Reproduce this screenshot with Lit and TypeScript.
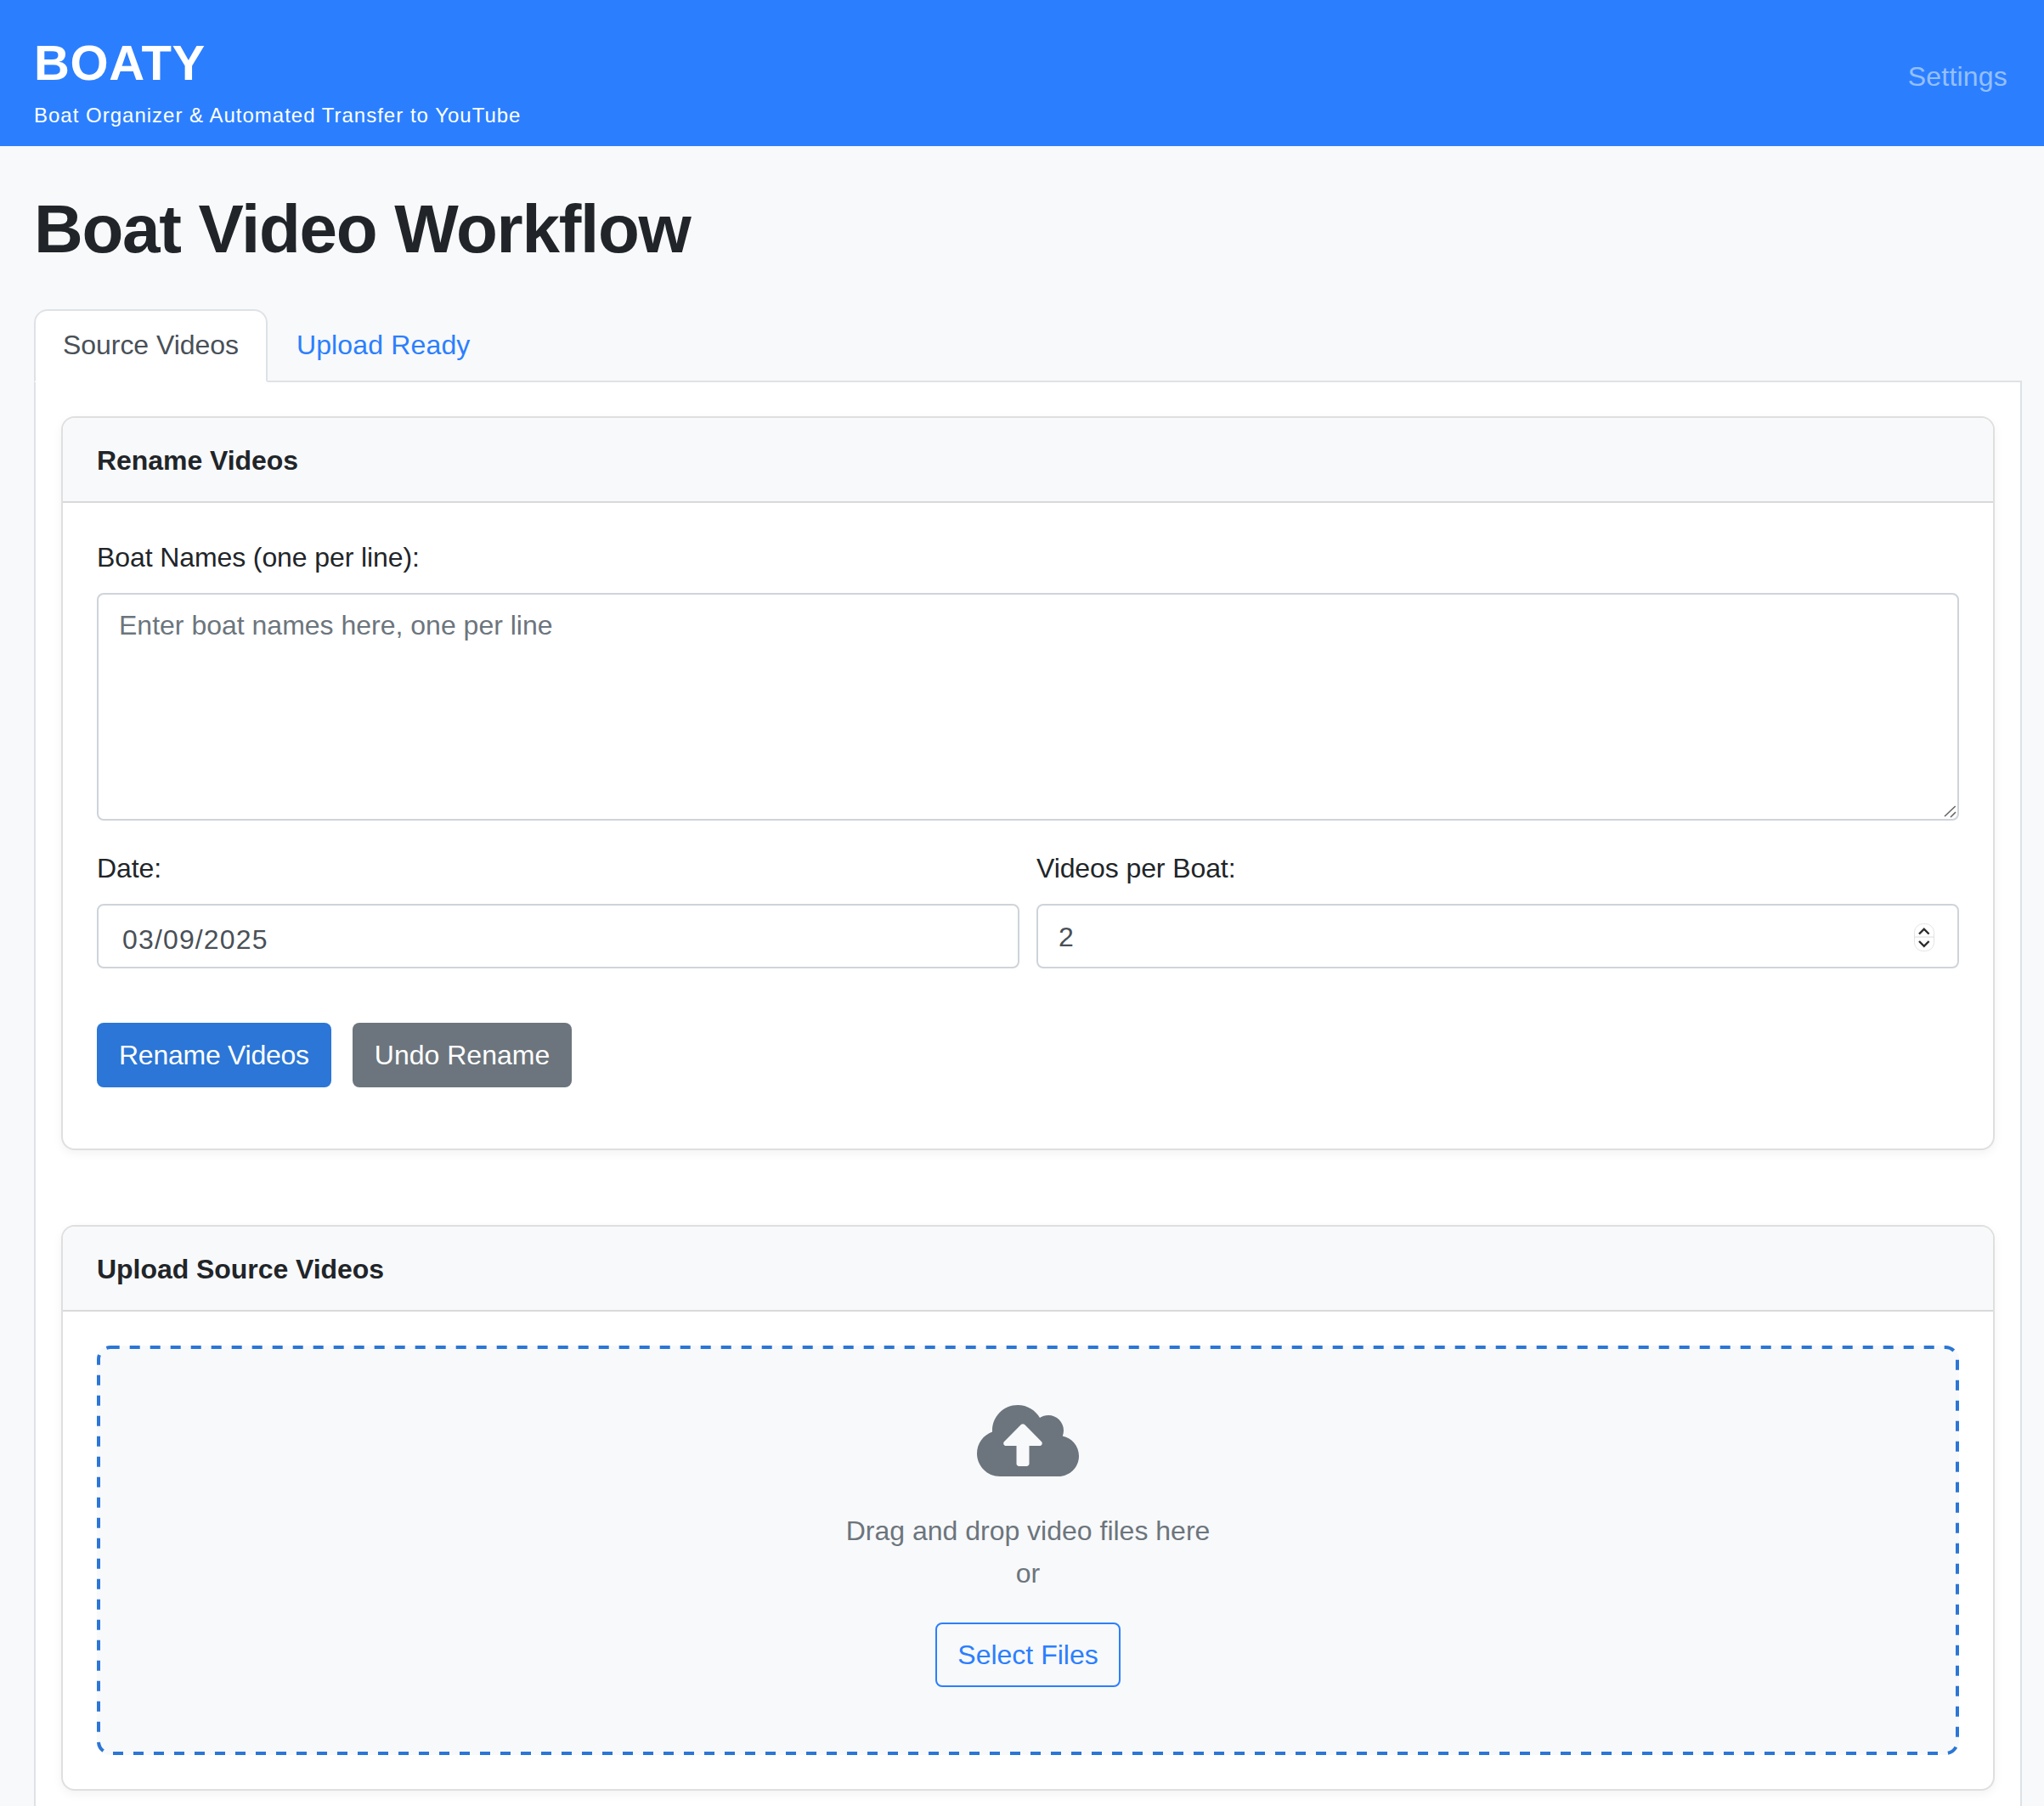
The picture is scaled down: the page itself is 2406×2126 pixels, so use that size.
import { LitElement, html, css } from "lit";
import { customElement } from "lit/decorators.js";

@customElement("app-root")
export class AppRoot extends LitElement {
  static styles = css`
    :host {
      display: block;
      height: 2126px;
      background: #f8f9fa;
      color: #212529;
      font-family: "Liberation Sans", Arial, sans-serif;
      font-size: 32px;
      line-height: 48px;
      overflow: hidden;
    }
    * {
      box-sizing: border-box;
    }

    .topbar {
      height: 172px;
      background: #2b7fff;
      padding: 39px 40px 0;
      display: flex;
      justify-content: space-between;
      align-items: flex-start;
      color: #fff;
    }
    .brand {
      margin: 0;
      font-size: 58px;
      line-height: 69px;
      font-weight: 700;
      letter-spacing: 0.6px;
    }
    .tagline {
      margin: 0;
      font-size: 24px;
      line-height: 36px;
      letter-spacing: 1px;
      padding-top: 10px;
    }
    .settings {
      color: rgba(255, 255, 255, 0.5);
      text-decoration: none;
      margin-top: 27px;
      margin-right: 3px;
      letter-spacing: 0.2px;
    }

    main {
      padding: 50px 26px 0 40px;
    }
    .title {
      margin: 0 0 46px;
      font-size: 80px;
      line-height: 96px;
      font-weight: 700;
      letter-spacing: -1.3px;
    }

    .tabs {
      display: flex;
      margin-bottom: -2px;
      position: relative;
    }
    .tab {
      padding: 16px 32px 16px;
      height: 86px;
      border: 2px solid transparent;
      border-radius: 16px 16px 0 0;
      color: #2b7fff;
      text-decoration: none;
      letter-spacing: 0.15px;
    }
    .tab.active {
      color: #495057;
      background: #fff;
      border-color: #dee2e6 #dee2e6 #fff;
      letter-spacing: -0.05px;
    }
    .tab-pane {
      background: #fff;
      border: 2px solid #dee2e6;
      border-bottom: 0;
      padding: 40px 30px;
    }

    .card {
      background: #fff;
      border: 2px solid rgba(0, 0, 0, 0.125);
      border-radius: 16px;
      box-shadow: 0 4px 12px rgba(0, 0, 0, 0.05);
    }
    .card + .card {
      margin-top: 88px;
    }
    .card-header {
      background: #f8f9fa;
      border-bottom: 2px solid rgba(0, 0, 0, 0.125);
      border-radius: 14px 14px 0 0;
      padding: 26px 40px 24px;
      font-weight: 700;
      letter-spacing: -0.05px;
    }
    .card-body {
      padding: 40px 40px 72px;
    }
    .dropzone-body {
      padding: 40px;
    }

    label {
      display: block;
      margin-bottom: 18px;
      letter-spacing: -0.1px;
    }
    .control {
      display: block;
      width: 100%;
      border: 2px solid #ced4da;
      border-radius: 8px;
      background: #fff;
      color: #495057;
      font: inherit;
      outline: none;
    }
    .control::placeholder {
      color: #6c757d;
      opacity: 1;
    }
    .textarea-wrap {
      position: relative;
      margin-bottom: 32px;
    }
    textarea.control {
      height: 268px;
      padding: 12px 24px;
      resize: none;
    }
    .grip {
      position: absolute;
      right: 0;
      bottom: 0;
      width: 20px;
      height: 20px;
      pointer-events: none;
    }
    input.control {
      height: 76px;
      padding: 2px 24px 0;
    }
    input.date {
      padding: 8px 28px 0;
      letter-spacing: 1.15px;
    }
    input[type="number"] {
      appearance: textfield;
    }
    input[type="number"]::-webkit-inner-spin-button {
      display: none;
    }

    .row {
      display: grid;
      grid-template-columns: 1fr 1fr;
      gap: 20px;
    }
    .number-wrap {
      position: relative;
    }
    .spinner {
      position: absolute;
      right: 29px;
      top: 23px;
      width: 24px;
      height: 33px;
    }

    .actions {
      display: flex;
      gap: 25px;
      margin-top: 64px;
    }
    .btn {
      height: 76px;
      padding: 0 24px;
      border: 2px solid transparent;
      border-radius: 8px;
      font: inherit;
      color: #fff;
    }
    .btn-primary {
      background: #2b76d6;
      letter-spacing: -0.25px;
    }
    .btn-secondary {
      background: #6c757d;
    }
    .btn-outline {
      background: transparent;
      border-color: #2b7fff;
      color: #2b7fff;
    }

    .dropzone {
      position: relative;
      height: 482px;
      background: #f8f9fa;
      border-radius: 16px;
      padding-top: 64px;
      display: flex;
      flex-direction: column;
      align-items: center;
      color: #6c757d;
    }
    .dash {
      position: absolute;
      inset: 0;
      width: 100%;
      height: 100%;
    }
    .dash rect {
      x: 2px;
      y: 2px;
      width: calc(100% - 4px);
      height: calc(100% - 4px);
      rx: 14px;
      fill: none;
      stroke: #2b76d6;
      stroke-width: 4;
      stroke-dasharray: 12 12;
      stroke-dashoffset: 1.3;
    }
    .cloud {
      display: block;
      width: 120px;
      height: 96px;
      fill: #6c757d;
      margin-bottom: 34px;
    }
    .dropzone p {
      margin: 0 0 2px;
    }
    .dropzone .btn {
      position: relative;
      margin-top: 32px;
    }
  `;

  render() {
    return html`
      <header class="topbar">
        <div>
          <h1 class="brand">BOATY</h1>
          <p class="tagline">Boat Organizer &amp; Automated Transfer to YouTube</p>
        </div>
        <a class="settings" href="#">Settings</a>
      </header>
      <main>
        <h1 class="title">Boat Video Workflow</h1>
        <nav class="tabs">
          <a class="tab active" href="#">Source Videos</a>
          <a class="tab" href="#">Upload Ready</a>
        </nav>
        <div class="tab-pane">
          <section class="card">
            <div class="card-header">Rename Videos</div>
            <div class="card-body">
              <label>Boat Names (one per line):</label>
              <div class="textarea-wrap">
                <textarea class="control" placeholder="Enter boat names here, one per line"></textarea>
                <svg class="grip" viewBox="0 0 20 20">
                  <path d="M3 15L15.7 3M10 16l6-6" fill="none" stroke="#666" stroke-width="1.6" />
                </svg>
              </div>
              <div class="row">
                <div>
                  <label>Date:</label>
                  <input class="control date" type="text" value="03/09/2025" />
                </div>
                <div>
                  <label>Videos per Boat:</label>
                  <div class="number-wrap">
                    <input class="control" type="number" value="2" />
                    <svg class="spinner" viewBox="0 0 24 33">
                      <rect x="0.5" y="0.5" width="23" height="32" rx="10" fill="#fff" stroke="#e3e3e3" />
                      <line x1="0.5" y1="16" x2="23.5" y2="16" stroke="#dcdcdc" />
                      <path d="M6 12.5l5.8-5.8 5.8 5.8M6 21l5.8 5.8 5.8-5.8" fill="none" stroke="#2b2b2b" stroke-width="2.4" />
                    </svg>
                  </div>
                </div>
              </div>
              <div class="actions">
                <button class="btn btn-primary">Rename Videos</button>
                <button class="btn btn-secondary">Undo Rename</button>
              </div>
            </div>
          </section>
          <section class="card">
            <div class="card-header">Upload Source Videos</div>
            <div class="dropzone-body">
              <div class="dropzone">
                <svg class="dash"><rect></rect></svg>
                <svg class="cloud" viewBox="0 0 640 512">
                  <path d="M537.6 226.6c4.1-10.7 6.4-22.4 6.4-34.6 0-53-43-96-96-96-19.7 0-38.1 6-53.3 16.2C367 64.2 315.3 32 256 32c-88.4 0-160 71.6-160 160 0 2.7.1 5.4.2 8.1C40.2 219.8 0 273.2 0 336c0 79.5 64.5 144 144 144h368c70.7 0 128-57.3 128-128 0-61.9-44-113.6-102.4-125.4zM393.4 288H328v112c0 8.8-7.2 16-16 16h-48c-8.8 0-16-7.2-16-16V288h-65.4c-14.3 0-21.4-17.2-11.3-27.3l105.4-105.4c6.2-6.2 16.4-6.2 22.6 0l105.4 105.4c10.1 10.1 2.9 27.3-11.4 27.3z" />
                </svg>
                <p>Drag and drop video files here</p>
                <p>or</p>
                <button class="btn btn-outline">Select Files</button>
              </div>
            </div>
          </section>
        </div>
      </main>
    `;
  }
}

declare global {
  interface HTMLElementTagNameMap {
    "app-root": AppRoot;
  }
}
